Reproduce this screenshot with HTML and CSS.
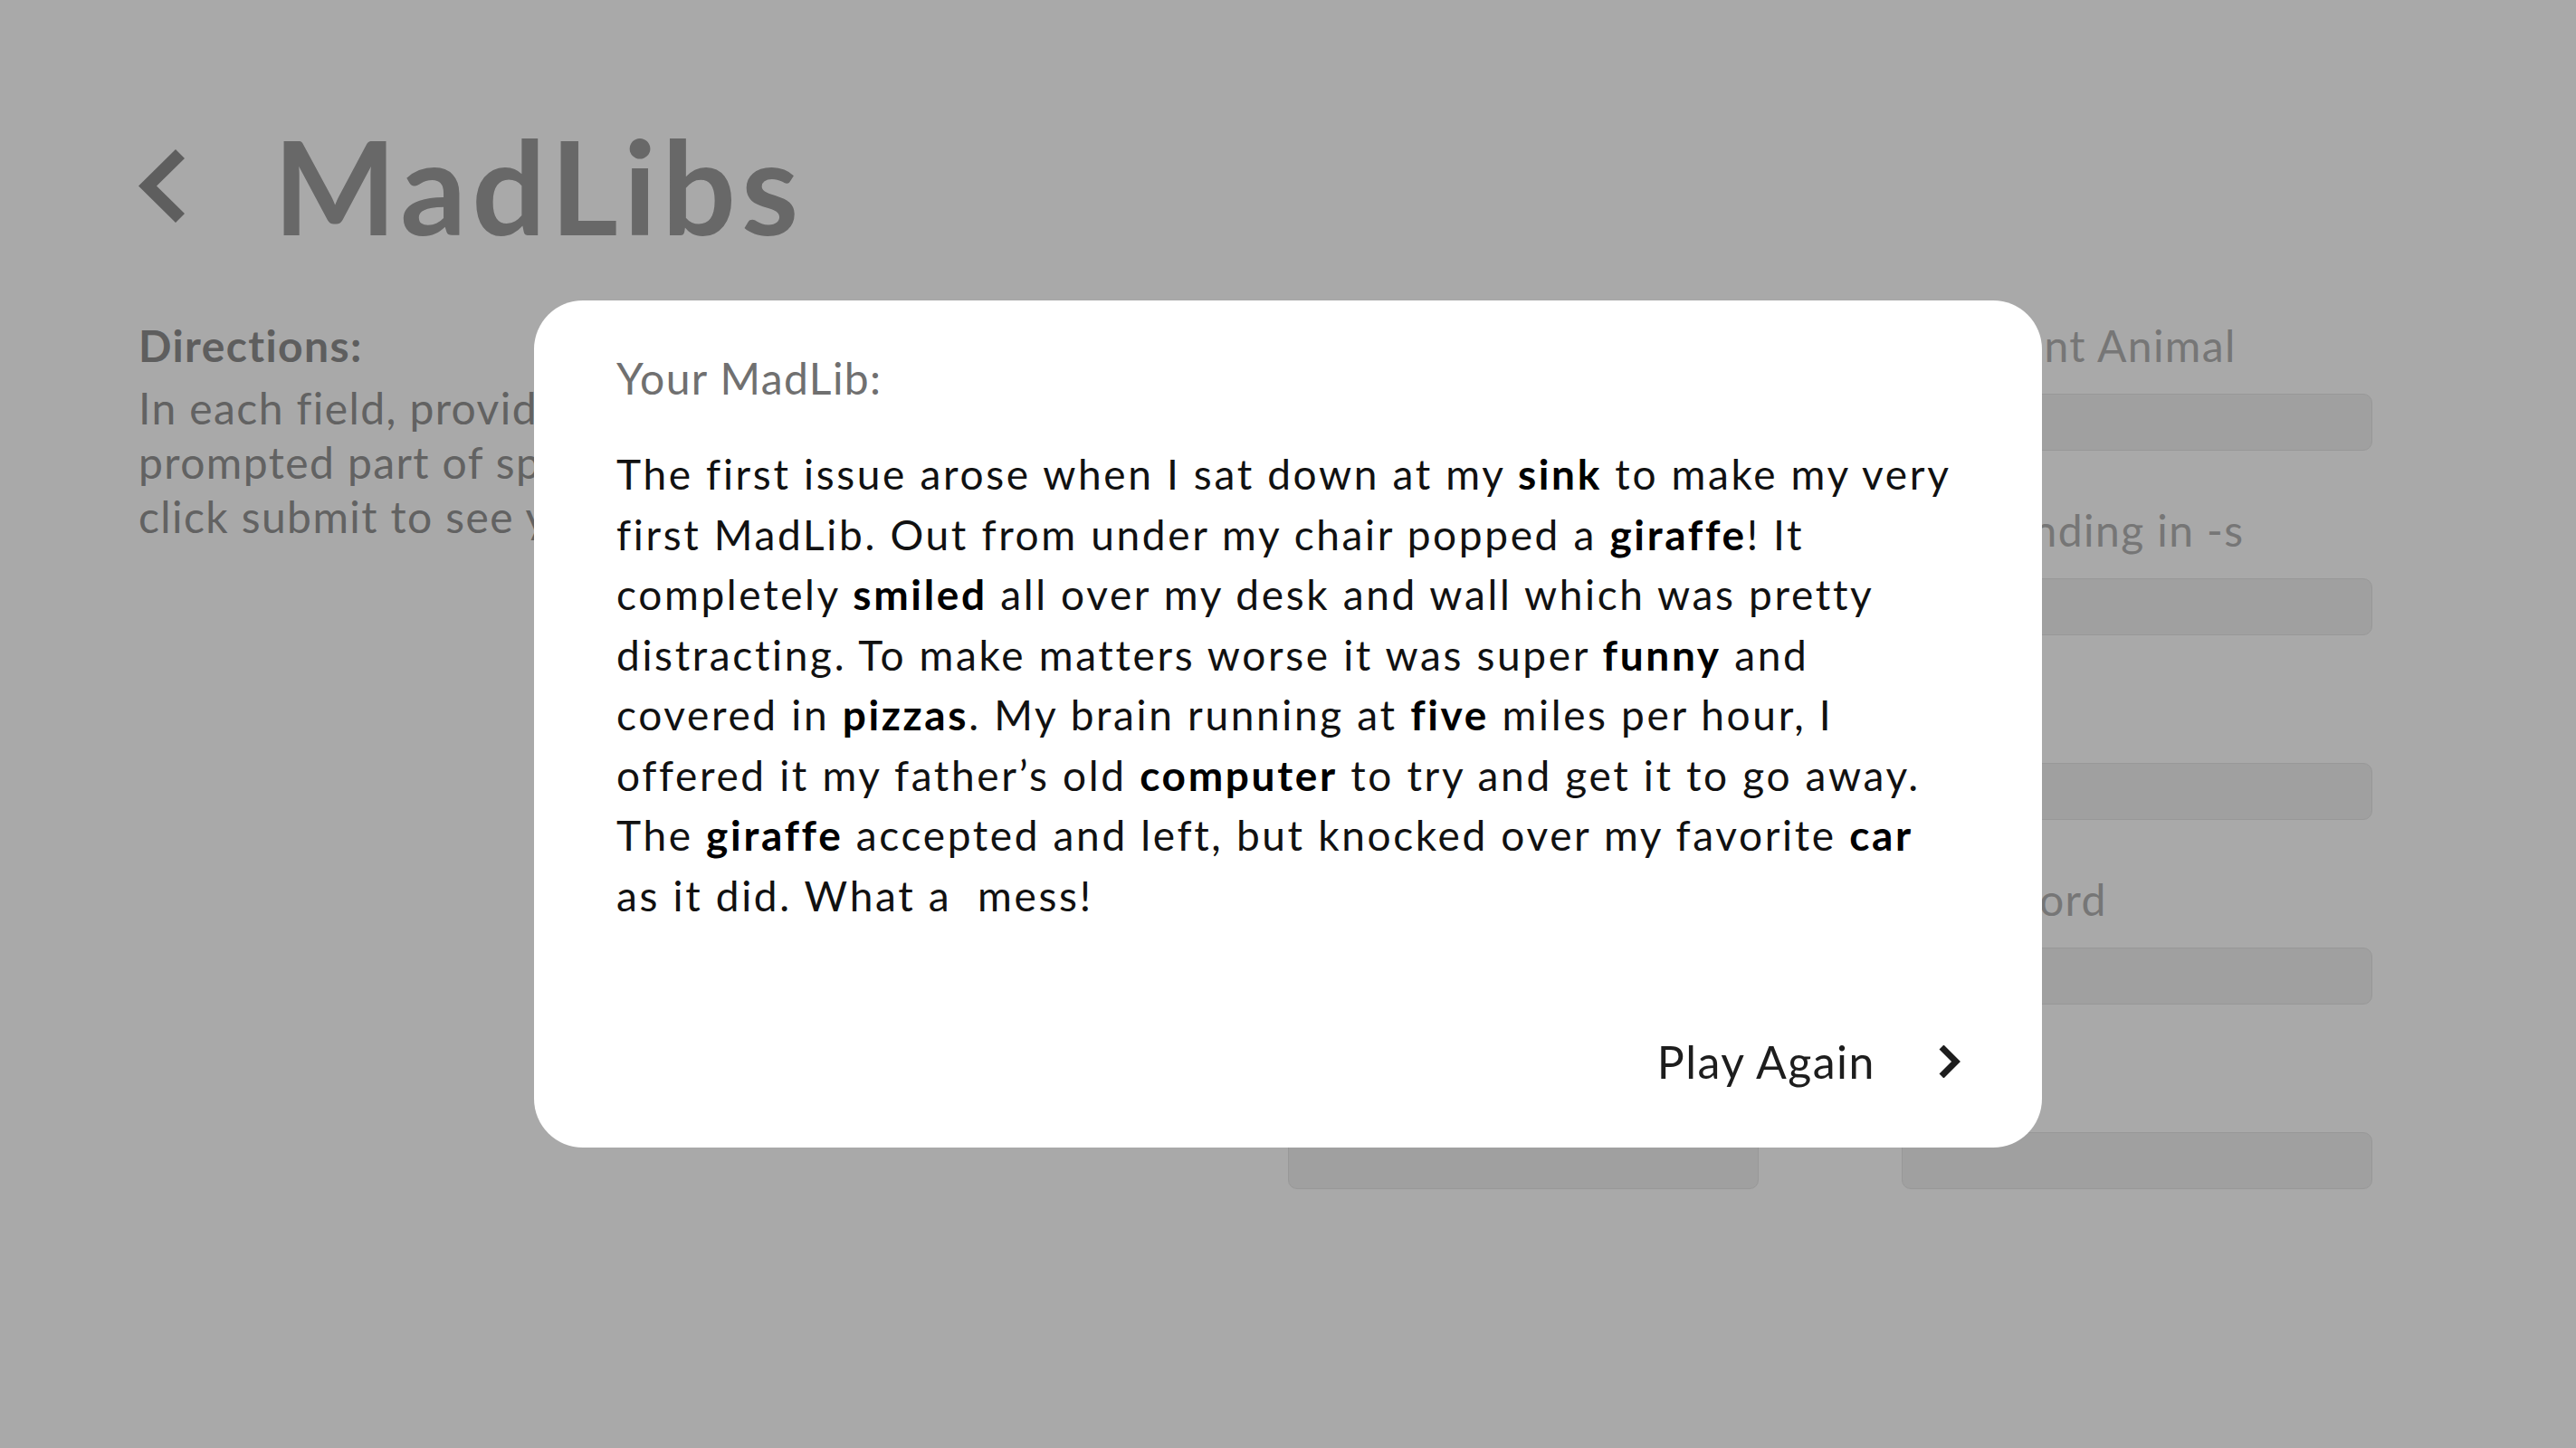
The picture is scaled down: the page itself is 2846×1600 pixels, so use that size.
FILE: index.html
```html
<!DOCTYPE html>
<html lang="en">
<head>
<meta charset="utf-8">
<title>MadLibs</title>
<link rel="stylesheet" href="styles.css">
</head>
<body>
<div class="page">
  <header class="header">
    <a class="back" href="#" aria-label="Back">
      <svg width="51" height="81" viewBox="0 0 51 81"><polygon points="41,0 51,10 20,40.5 51,71 41,81 0,40.5" fill="#8f8f8f"/></svg>
    </a>
    <h1 class="title">MadLibs</h1>
  </header>
  <main class="content">
    <section class="directions">
      <h2 class="dir-title">Directions:</h2>
      <p class="dir-text">In each field, provide a word for the prompted part of speech. When done, click submit to see your MadLib!</p>
    </section>
    <form class="fields">
      <label class="field"><span class="label">Noun</span><input class="input" type="text"></label>
      <label class="field"><span class="label">Different Animal</span><input class="input" type="text"></label>
      <label class="field"><span class="label">Past Tense Verb</span><input class="input" type="text"></label>
      <label class="field"><span class="label">Verb ending in -s</span><input class="input" type="text"></label>
      <label class="field"><span class="label">Adjective</span><input class="input" type="text"></label>
      <label class="field"><span class="label">Noun</span><input class="input" type="text"></label>
      <label class="field"><span class="label">Plural Noun</span><input class="input" type="text"></label>
      <label class="field"><span class="label">Silly Word</span><input class="input" type="text"></label>
      <label class="field"><span class="label">Number</span><input class="input" type="text"></label>
      <label class="field"><span class="label">Noun</span><input class="input" type="text"></label>
    </form>
  </main>
</div>
<div class="overlay">
  <div class="modal">
    <p class="modal-title">Your MadLib:</p>
    <p class="story">The first issue arose when I sat down at my <b>sink</b> to make my very<br>first MadLib. Out from under my chair popped a <b>giraffe</b>! It<br>completely <b>smiled</b> all over my desk and wall which was pretty<br>distracting. To make matters worse it was super <b>funny</b> and<br>covered in <b>pizzas</b>. My brain running at <b>five</b> miles per hour, I<br>offered it my father’s old <b>computer</b> to try and get it to go away.<br>The <b>giraffe</b> accepted and left, but knocked over my favorite <b>car</b><br>as it did. What a&nbsp; mess!</p>
    <div class="modal-footer">
      <a class="play" href="#">Play Again
        <svg class="play-icon" width="26" height="36" viewBox="0 0 26 36"><polyline points="4,2 20,18 4,34" fill="none" stroke="#1d1d1d" stroke-width="7"/></svg>
      </a>
    </div>
  </div>
</div>
</body>
</html>
```

FILE: styles.css
```css
* { box-sizing: border-box; }
html, body { margin: 0; padding: 0; }
body {
  font-family: Lato, "Open Sans", "Liberation Sans", sans-serif;
  background: #ffffff;
  width: 2846px;
  height: 1600px;
  overflow: hidden;
}
.page { padding-left: 153px; }
.header {
  display: flex;
  align-items: center;
  margin-top: 133px;
  height: 144px;
}
.back { display: flex; width: 149px; }
.title {
  margin: 0;
  font-size: 144px;
  line-height: 1;
  font-weight: 700;
  color: #9d9d9d;
  letter-spacing: 6px;
}
.content {
  display: grid;
  grid-template-columns: 1270px 1198px;
  margin-top: 75px;
}
.directions { width: 900px; }
.dir-title {
  margin: 0 0 9px;
  font-size: 48px;
  line-height: 60px;
  font-weight: 700;
  color: #8f8f8f;
  letter-spacing: 1.4px;
}
.dir-text {
  margin: 0;
  font-size: 48px;
  line-height: 60px;
  color: #949494;
  letter-spacing: 1.4px;
}
.fields {
  display: grid;
  grid-template-columns: 520px 520px;
  column-gap: 158px;
  row-gap: 58px;
  margin: 0;
}
.field { display: flex; flex-direction: column; }
.label {
  font-size: 48px;
  line-height: 60px;
  color: #b3b3b3;
  margin-bottom: 23px;
  letter-spacing: 1.4px;
}
.input {
  height: 63px;
  border: 1px solid #e6e6e6;
  border-radius: 10px;
  background: #f1f1f1;
}
.overlay {
  position: fixed;
  inset: 0;
  background: rgba(0, 0, 0, 0.337);
  display: flex;
  align-items: center;
  justify-content: center;
}
.modal {
  width: 1666px;
  height: 936px;
  background: #ffffff;
  border-radius: 54px;
  padding: 56px 89px 65px 91px;
  display: flex;
  flex-direction: column;
}
.modal-title {
  margin: 0 0 43px;
  font-size: 48px;
  line-height: 60px;
  color: #707070;
  letter-spacing: 1.4px;
}
.story {
  margin: 0;
  font-size: 46px;
  line-height: 66.5px;
  color: #111111;
  letter-spacing: 2.65px;
  white-space: nowrap;
}
.story b { font-weight: 700; color: #000; }
.modal-footer {
  margin-top: auto;
  display: flex;
  justify-content: flex-end;
}
.play {
  display: flex;
  align-items: center;
  gap: 69px;
  font-size: 50px;
  line-height: 60px;
  color: #1d1d1d;
  text-decoration: none;
  letter-spacing: 1.5px;
}
.play-icon { display: block; }
```
